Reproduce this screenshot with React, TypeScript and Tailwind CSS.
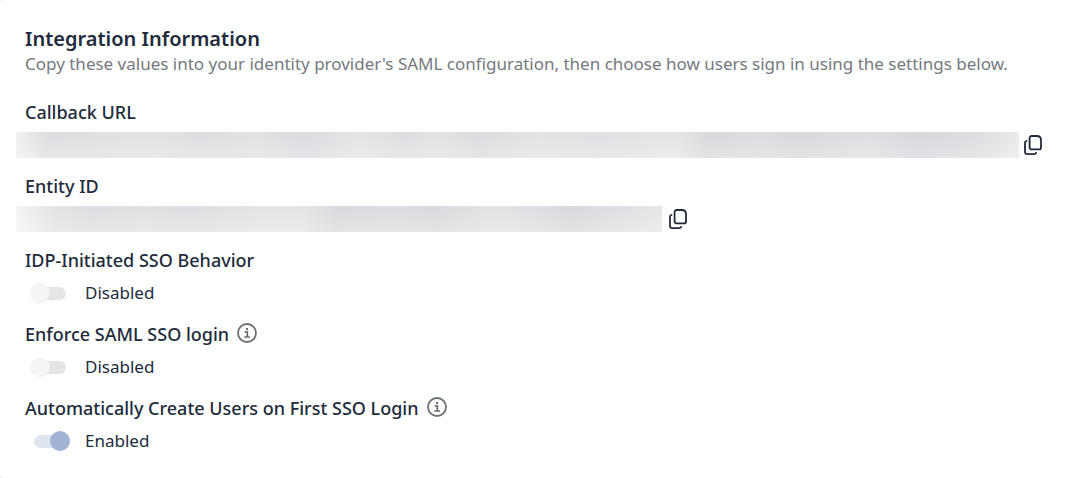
import { useState, type ReactNode } from "react";

function CopyIcon() {
  return (
    <svg width="20" height="22" viewBox="0 0 20 22" fill="none" stroke="currentColor" strokeWidth="1.8" strokeLinejoin="round" strokeLinecap="round">
      <path d="M8.600 2h5.200q4.200 0 4.200 4.200v7.200a2 2 0 0 1-2 2H8.600a2 2 0 0 1-2-2V4a2 2 0 0 1 2-2z" />
      <path d="M3.500 6.800Q2 7 2 8.800V17.800a2.400 2.400 0 0 0 2.400 2.400h6.600q1.800 0 2.200-1.400" />
    </svg>
  );
}

function InfoIcon() {
  return (
    <svg width="20" height="20" viewBox="0 0 20 20" fill="none" stroke="currentColor">
      <circle cx="10" cy="10" r="9" strokeWidth="1.8" />
      <path d="M7.700 8.800h2.600v5M7.200 14h5.800" strokeWidth="1.700" />
      <rect x="9" y="5" width="2" height="2" fill="currentColor" stroke="none" />
    </svg>
  );
}

function Field({ label, htmlFor, info, children }: { label: string; htmlFor?: string; info?: boolean; children: ReactNode }) {
  return (
    <div className="pb-2">
      <div className="flex h-7 items-center gap-2 text-lg font-medium">
        {htmlFor ? <label htmlFor={htmlFor}>{label}</label> : <h3>{label}</h3>}
        {info && (
          <button type="button" aria-label={`About ${label}`} className="pb-0.5 text-[#6b7075]">
            <InfoIcon />
          </button>
        )}
      </div>
      <div className="flex h-[38px] items-center">{children}</div>
    </div>
  );
}

function Toggle({ id, defaultOn = false }: { id: string; defaultOn?: boolean }) {
  const [on, setOn] = useState(defaultOn);

  return (
    <>
      <input
        id={id}
        type="checkbox"
        role="switch"
        checked={on}
        onChange={e => setOn(e.target.checked)}
        className="ml-[5px] grid h-5 w-10 appearance-none items-center before:col-start-1 before:row-start-1 before:mx-1 before:h-[13px] before:rounded-full before:bg-[#e4e5e7] after:z-10 after:col-start-1 after:row-start-1 after:size-5 after:rounded-full after:bg-[#f4f5f7] after:shadow-[0_1px_2px_rgba(0,0,0,0.03)] checked:before:bg-[#dfe5ef] checked:after:justify-self-end checked:after:bg-[#a0b3d4]"
      />
      <span className="ml-[15px]">{on ? "Enabled" : "Disabled"}</span>
    </>
  );
}

export default function App() {
  return (
    <div className="min-h-screen bg-[#eeeeee] font-['Noto_Sans',sans-serif] text-[17px] text-[#212b3b]">
      <main className="min-h-screen rounded-l bg-white px-[25px] pt-[25px]">
        <header className="pb-[23px]">
          <h2 className="text-xl leading-7 font-semibold">Integration Information</h2>
          <p className="leading-[22px] text-[#75797d]">
            Copy these values into your identity provider's SAML configuration, then choose how users sign in using the settings below.
          </p>
        </header>

        <Field label="Callback URL">
          <div className="-ml-[9px] h-[26px] max-w-[1003px] flex-1 bg-[linear-gradient(to_bottom,transparent_20%,rgba(255,255,255,0.25)),linear-gradient(to_right,#f1f1f1,#dedfe2_3%,#e2e3e5_14%,#dedfe2_18%,#e1e2e4_24%,#dbdce0_29%,#e4e5e7_34%,#dedfe2_39%,#e2e3e5_42%,#dcdde0_46%,#e3e4e6_52%,#e0e1e4_58%,#e5e6e8_66%,#d9dadd_69%,#dddee1_74%,#d9dadd_78%,#dfe0e3_85%,#d8d9dd_90%,#dddee1_96%,#eaebec)]" />
          <button type="button" aria-label="Copy callback URL" className="ml-1">
            <CopyIcon />
          </button>
        </Field>

        <Field label="Entity ID">
          <div className="-ml-[9px] h-[26px] w-[646px] bg-[linear-gradient(to_bottom,transparent_20%,rgba(255,255,255,0.25)),linear-gradient(to_right,#f4f4f4,#e3e4e6_6%,#dedfe2_12%,#e1e2e4_20%,#dedfe2_26%,#e4e5e7_37%,#e4e5e7_44%,#dadbde_50%,#dddee1_58%,#dadbde_65%,#e3e4e6_74%,#dfe0e3_80%,#d9dadd_86%,#dfe0e3_93%,#e6e7e9)]" />
          <button type="button" aria-label="Copy entity ID" className="ml-1.5">
            <CopyIcon />
          </button>
        </Field>

        <Field label="IDP-Initiated SSO Behavior" htmlFor="idp-initiated">
          <Toggle id="idp-initiated" />
        </Field>
        <Field label="Enforce SAML SSO login" htmlFor="enforce-saml" info>
          <Toggle id="enforce-saml" />
        </Field>
        <Field label="Automatically Create Users on First SSO Login" htmlFor="auto-create" info>
          <Toggle id="auto-create" defaultOn />
        </Field>
      </main>
    </div>
  );
}
